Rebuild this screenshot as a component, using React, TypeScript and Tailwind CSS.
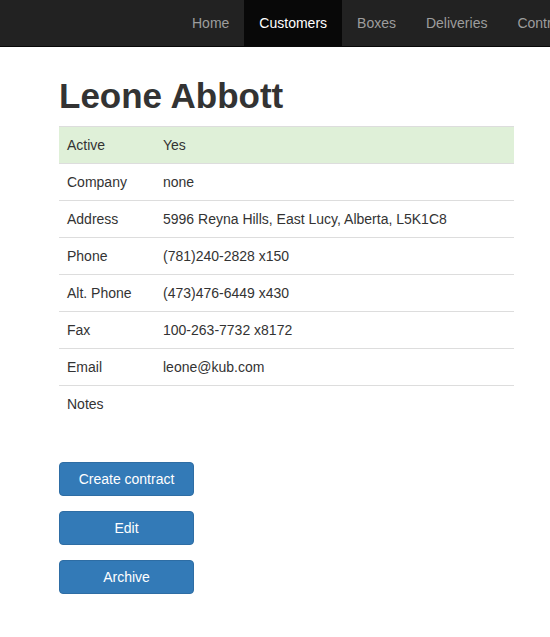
const navItems = ['Home', 'Customers', 'Boxes', 'Deliveries', 'Contracts'];

const rows: { label: string; value: string; success?: boolean }[] = [
  { label: 'Active', value: 'Yes', success: true },
  { label: 'Company', value: 'none' },
  { label: 'Address', value: '5996 Reyna Hills, East Lucy, Alberta, L5K1C8' },
  { label: 'Phone', value: '(781)240-2828 x150' },
  { label: 'Alt. Phone', value: '(473)476-6449 x430' },
  { label: 'Fax', value: '100-263-7732 x8172' },
  { label: 'Email', value: 'leone@kub.com' },
  { label: 'Notes', value: '' },
];

const actions = ['Create contract', 'Edit', 'Archive'];

export default function App() {
  return (
    <div className="min-h-[637px] w-[550px] overflow-hidden bg-white text-[14px] text-[#333] font-['Liberation_Sans',Arial,sans-serif]">
      {/* Navbar */}
      <nav className="h-[47px] bg-[#222] border-b border-[#080808] overflow-hidden">
        <ul className="flex ml-[177px] whitespace-nowrap">
          {navItems.map((item) => (
            <li
              key={item}
              className={
                item === 'Customers'
                  ? 'px-[15px] h-[46px] flex items-center leading-5 bg-[#080808] text-white'
                  : 'px-[15px] h-[46px] flex items-center leading-5 text-[#9d9d9d]'
              }
            >
              {item}
            </li>
          ))}
        </ul>
      </nav>

      {/* Content */}
      <div className="pl-[59px] pr-[36px] pt-[29px]">
        <h1 className="text-[35px] font-bold leading-[40px] mb-[10px] text-[#333]">Leone Abbott</h1>

        <table className="w-[455px] border-collapse">
          <tbody>
            {rows.map((row) => (
              <tr
                key={row.label}
                className={row.success ? 'bg-[#dff0d8] border-t border-[#ddd]' : 'border-t border-[#ddd]'}
              >
                <td className="w-[96px] px-2 py-2 leading-5 h-[37px] align-top">{row.label}</td>
                <td className="px-2 py-2 leading-5 align-top">{row.value}</td>
              </tr>
            ))}
          </tbody>
        </table>

        <div className="flex flex-col gap-[15px] mt-[39px]">
          {actions.map((label) => (
            <button
              key={label}
              className="w-[135px] h-[34px] rounded-[4px] bg-[#337ab7] border border-[#2e6da4] text-white text-[14px] leading-5"
            >
              {label}
            </button>
          ))}
        </div>
      </div>
    </div>
  );
}
